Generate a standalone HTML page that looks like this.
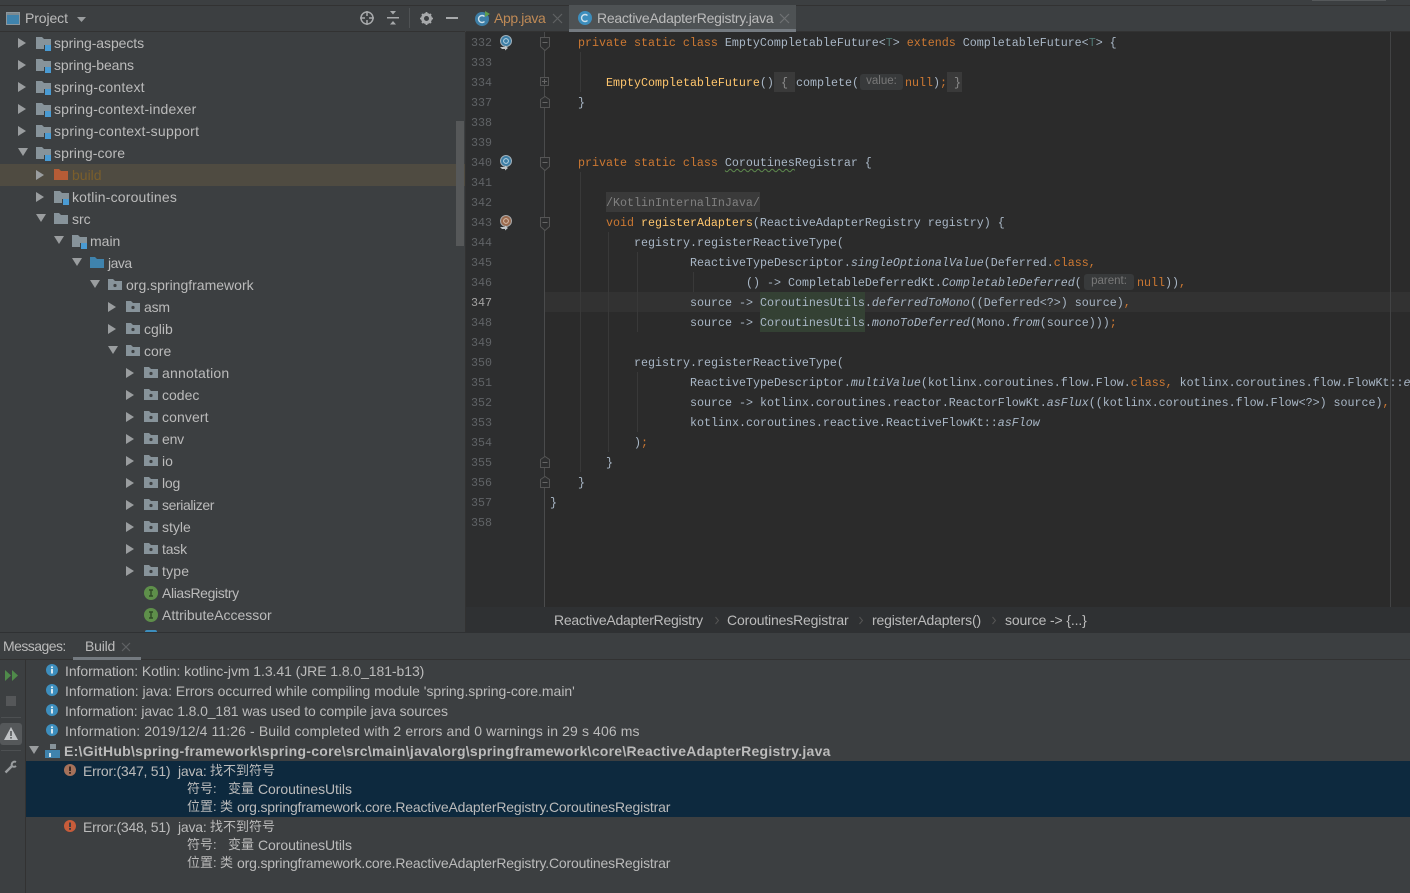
<!DOCTYPE html>
<html><head><meta charset="utf-8"><title>IDE</title>
<style>
html,body{margin:0;padding:0;background:#3c3f41}
#r{position:relative;width:1410px;height:893px;overflow:hidden;background:#3c3f41;font-family:"Liberation Sans","Noto Sans CJK SC",sans-serif;font-size:14px;color:#bbb}
.a{position:absolute}
.t{position:absolute;line-height:20px;white-space:pre}
.z{font-size:13px}
.c{position:absolute;line-height:22px;white-space:pre;font-family:"Liberation Mono",monospace;font-size:11.67px;color:#a9b7c6}
.n{position:absolute;left:466px;width:26px;text-align:right;line-height:22px;font-family:"Liberation Mono",monospace;font-size:11.67px;color:#606366}
.k{color:#cc7832}.m{color:#ffc66d}.i{font-style:italic}
.g{position:absolute;width:1px;background:#393939}
.h{position:absolute;background:#383a3b;border-radius:3px;color:#787878;font-size:11.5px;line-height:15px;text-align:center}
svg{position:absolute;overflow:visible}
</style></head><body><div id="r">
<svg width="0" height="0" style="left:0;top:0">
<defs>
<symbol id="mod" viewBox="0 0 17 16"><path d="M0 0h6l2 2h7v6H8v4H0z" fill="#87939a"/><rect x="9" y="8" width="6" height="6" fill="#4a9bd3"/></symbol>
<symbol id="pkg" viewBox="0 0 14 12"><path d="M0 0h5l2 2h7v9H0z" fill="#87939a"/><circle cx="7" cy="6.5" r="1.6" fill="#3c3f41"/></symbol>
<symbol id="ar" viewBox="0 0 8 10"><path d="M0 0l8 5-8 5z" fill="#9a9d9f"/></symbol>
<symbol id="ad" viewBox="0 0 10 8"><path d="M0 0h10L5 8z" fill="#9a9d9f"/></symbol>
<symbol id="inf" viewBox="0 0 12 12"><circle cx="6" cy="6" r="6" fill="#3d8ebd"/><rect x="5" y="5" width="2" height="4.5" fill="#d8e6ee"/><rect x="5" y="2.4" width="2" height="1.8" fill="#d8e6ee"/></symbol>
<symbol id="fold" viewBox="0 0 10 14"><path d="M.5.5h9v9L5 13.5.5 9.5z" fill="#2d2e2f" stroke="#555"/><path d="M2.5 5.5h5" stroke="#666"/></symbol>
<symbol id="gi" viewBox="0 0 14 16"><circle cx="7" cy="6" r="5.5" fill="#3d7ea6" stroke="#a0b0ba"/><circle cx="7" cy="6" r="2.4" fill="none" stroke="#b8d4e4"/><path d="M1 12h5v-1.500l3 2.500-3 2.500V14H3z" fill="#c0c4c6"/></symbol>
</defs></svg>

<!-- top strip -->
<div class="a" style="left:0;top:0;width:1410px;height:5px;background:#3c3f41;border-bottom:1px solid #323232"></div>
<div class="a" style="left:1312px;top:0;width:74px;height:1px;background:#55585a"></div>

<!-- project header -->
<div class="a" style="left:0;top:31px;width:465px;height:1px;background:#323232"></div>
<svg style="left:6px;top:12px" width="14" height="13"><rect x=".5" y=".5" width="13" height="12" fill="#3f83ad" stroke="#8d979d"/><rect x="1" y="1" width="12" height="2" fill="#7b8990"/></svg>
<div class="t" style="left:25px;top:8px;color:#bbb;letter-spacing:-.1px">Project</div>
<svg style="left:77px;top:17px" width="9" height="5"><path d="M0 0h9L4.500 5z" fill="#9a9d9f"/></svg>
<svg style="left:360px;top:11px" width="14" height="14" fill="none" stroke="#a7a9ab" stroke-width="1.500"><circle cx="7" cy="7" r="6"/><path d="M7 0v5M7 9v5M0 7h5M9 7h5"/></svg>
<svg style="left:387px;top:11px" width="12" height="14" fill="#a7a9ab"><rect y="6" width="12" height="1.500"/><path d="M3 0h6L6 3.500zM3 13.500h6L6 10z"/></svg>
<div class="a" style="left:409px;top:8px;width:1px;height:20px;background:#4f5254"></div>
<svg style="left:420px;top:12px" width="13" height="13"><circle cx="6.500" cy="6.500" r="4" fill="none" stroke="#a7a9ab" stroke-width="3"/><path d="M6.500 0v13M0 6.500h13M2 2l9 9M11 2l-9 9" stroke="#a7a9ab" stroke-width="1.800" stroke-dasharray="2 9 2 0"/></svg>
<div class="a" style="left:446px;top:17px;width:12px;height:2px;background:#a7a9ab"></div>

<!-- tree -->
<div class="a" style="left:0;top:164px;width:465px;height:22px;background:#4f4b41"></div>
<div class="a" style="left:456px;top:121px;width:8px;height:125px;background:#565859"></div>
<div class="a" style="left:465px;top:32px;width:1px;height:600px;background:#323232"></div>

<svg style="left:18px;top:38px" width="8" height="10"><use href="#ar"/></svg><svg style="left:36px;top:37px" width="17" height="16"><use href="#mod"/></svg><div class="t" style="left:54px;top:33px;letter-spacing:-.07px">spring-aspects</div>
<svg style="left:18px;top:60px" width="8" height="10"><use href="#ar"/></svg><svg style="left:36px;top:59px" width="17" height="16"><use href="#mod"/></svg><div class="t" style="left:54px;top:55px;letter-spacing:-.08px">spring-beans</div>
<svg style="left:18px;top:82px" width="8" height="10"><use href="#ar"/></svg><svg style="left:36px;top:81px" width="17" height="16"><use href="#mod"/></svg><div class="t" style="left:54px;top:77px;letter-spacing:.2px">spring-context</div>
<svg style="left:18px;top:104px" width="8" height="10"><use href="#ar"/></svg><svg style="left:36px;top:103px" width="17" height="16"><use href="#mod"/></svg><div class="t" style="left:54px;top:99px;letter-spacing:.18px">spring-context-indexer</div>
<svg style="left:18px;top:126px" width="8" height="10"><use href="#ar"/></svg><svg style="left:36px;top:125px" width="17" height="16"><use href="#mod"/></svg><div class="t" style="left:54px;top:121px;letter-spacing:.27px">spring-context-support</div>
<svg style="left:18px;top:148px" width="10" height="8"><use href="#ad"/></svg><svg style="left:36px;top:147px" width="17" height="16"><use href="#mod"/></svg><div class="t" style="left:54px;top:143px;letter-spacing:.1px">spring-core</div>
<svg style="left:36px;top:170px" width="8" height="10"><use href="#ar"/></svg><svg style="left:54px;top:169px" width="14" height="12"><path d="M0 0h5l2 2h7v9H0z" fill="#b65c36"/></svg><div class="t" style="left:72px;top:165px;color:#7a5e2c">build</div>
<svg style="left:36px;top:192px" width="8" height="10"><use href="#ar"/></svg><svg style="left:54px;top:191px" width="17" height="16"><use href="#mod"/></svg><div class="t" style="left:72px;top:187px;letter-spacing:.18px">kotlin-coroutines</div>
<svg style="left:36px;top:214px" width="10" height="8"><use href="#ad"/></svg><svg style="left:54px;top:213px" width="14" height="12"><path d="M0 0h5l2 2h7v9H0z" fill="#87939a"/></svg><div class="t" style="left:72px;top:209px">src</div>
<svg style="left:54px;top:236px" width="10" height="8"><use href="#ad"/></svg><svg style="left:72px;top:235px" width="17" height="16"><use href="#mod"/></svg><div class="t" style="left:90px;top:231px">main</div>
<svg style="left:72px;top:258px" width="10" height="8"><use href="#ad"/></svg><svg style="left:90px;top:257px" width="14" height="12"><path d="M0 0h5l2 2h7v9H0z" fill="#3f83ad"/></svg><div class="t" style="left:108px;top:253px;letter-spacing:-.5px">java</div>
<svg style="left:90px;top:280px" width="10" height="8"><use href="#ad"/></svg><svg style="left:108px;top:279px" width="14" height="12"><use href="#pkg"/></svg><div class="t" style="left:126px;top:275px">org.springframework</div>
<svg style="left:108px;top:302px" width="8" height="10"><use href="#ar"/></svg><svg style="left:126px;top:301px" width="14" height="12"><use href="#pkg"/></svg><div class="t" style="left:144px;top:297px;letter-spacing:-.2px">asm</div>
<svg style="left:108px;top:324px" width="8" height="10"><use href="#ar"/></svg><svg style="left:126px;top:323px" width="14" height="12"><use href="#pkg"/></svg><div class="t" style="left:144px;top:319px">cglib</div>
<svg style="left:108px;top:346px" width="10" height="8"><use href="#ad"/></svg><svg style="left:126px;top:345px" width="14" height="12"><use href="#pkg"/></svg><div class="t" style="left:144px;top:341px">core</div>
<svg style="left:126px;top:368px" width="8" height="10"><use href="#ar"/></svg><svg style="left:144px;top:367px" width="14" height="12"><use href="#pkg"/></svg><div class="t" style="left:162px;top:363px;letter-spacing:.2px">annotation</div>
<svg style="left:126px;top:390px" width="8" height="10"><use href="#ar"/></svg><svg style="left:144px;top:389px" width="14" height="12"><use href="#pkg"/></svg><div class="t" style="left:162px;top:385px">codec</div>
<svg style="left:126px;top:412px" width="8" height="10"><use href="#ar"/></svg><svg style="left:144px;top:411px" width="14" height="12"><use href="#pkg"/></svg><div class="t" style="left:162px;top:407px;letter-spacing:.1px">convert</div>
<svg style="left:126px;top:434px" width="8" height="10"><use href="#ar"/></svg><svg style="left:144px;top:433px" width="14" height="12"><use href="#pkg"/></svg><div class="t" style="left:162px;top:429px;letter-spacing:-.2px">env</div>
<svg style="left:126px;top:456px" width="8" height="10"><use href="#ar"/></svg><svg style="left:144px;top:455px" width="14" height="12"><use href="#pkg"/></svg><div class="t" style="left:162px;top:451px">io</div>
<svg style="left:126px;top:478px" width="8" height="10"><use href="#ar"/></svg><svg style="left:144px;top:477px" width="14" height="12"><use href="#pkg"/></svg><div class="t" style="left:162px;top:473px;letter-spacing:-.2px">log</div>
<svg style="left:126px;top:500px" width="8" height="10"><use href="#ar"/></svg><svg style="left:144px;top:499px" width="14" height="12"><use href="#pkg"/></svg><div class="t" style="left:162px;top:495px;letter-spacing:-.4px">serializer</div>
<svg style="left:126px;top:522px" width="8" height="10"><use href="#ar"/></svg><svg style="left:144px;top:521px" width="14" height="12"><use href="#pkg"/></svg><div class="t" style="left:162px;top:517px">style</div>
<svg style="left:126px;top:544px" width="8" height="10"><use href="#ar"/></svg><svg style="left:144px;top:543px" width="14" height="12"><use href="#pkg"/></svg><div class="t" style="left:162px;top:539px;letter-spacing:-.2px">task</div>
<svg style="left:126px;top:566px" width="8" height="10"><use href="#ar"/></svg><svg style="left:144px;top:565px" width="14" height="12"><use href="#pkg"/></svg><div class="t" style="left:162px;top:561px;letter-spacing:.2px">type</div>
<svg style="left:144px;top:586px" width="14" height="14"><circle cx="7" cy="7" r="7" fill="#5e8f4a"/><path d="M5 4h4M7 4v6M5 10h4" stroke="#2f4a26" stroke-width="1.400"/></svg><div class="t" style="left:162px;top:583px;letter-spacing:-.38px">AliasRegistry</div>
<svg style="left:144px;top:608px" width="14" height="14"><circle cx="7" cy="7" r="7" fill="#5e8f4a"/><path d="M5 4h4M7 4v6M5 10h4" stroke="#2f4a26" stroke-width="1.400"/></svg><div class="t" style="left:162px;top:605px">AttributeAccessor</div>
<div class="a" style="left:145px;top:630px;width:12px;height:2px;border-radius:6px 6px 0 0;background:#3d8ebd"></div>

<!-- tabs -->
<div class="a" style="left:466px;top:31px;width:944px;height:1px;background:#323232"></div>
<svg style="left:475px;top:11px" width="15" height="15"><circle cx="7" cy="8" r="7" fill="#3d7ea6"/><path d="M9.500 5.500A3.500 3.500 0 1 0 9.500 10.500" fill="none" stroke="#cfe0ea" stroke-width="1.400"/><path d="M10 0l5 3-5 3z" fill="#5f9e4e"/></svg>
<div class="t" style="left:494px;top:8px;color:#bf8a56;letter-spacing:-.38px">App.java</div>
<svg style="left:553px;top:14px" width="9" height="9" stroke="#5f6264" stroke-width="1.200"><path d="M0 0l9 9M9 0L0 9"/></svg>
<div class="a" style="left:569px;top:5px;width:227px;height:24px;background:#4e5254"></div>
<div class="a" style="left:569px;top:29px;width:227px;height:3px;background:#747a80"></div>
<svg style="left:578px;top:11px" width="14" height="14"><circle cx="7" cy="7" r="7" fill="#3d8ebd"/><path d="M9.500 4.500A3.500 3.500 0 1 0 9.500 9.500" fill="none" stroke="#cfe0ea" stroke-width="1.400"/></svg>
<div class="t" style="left:597px;top:8px;color:#bbb;letter-spacing:-.25px">ReactiveAdapterRegistry.java</div>
<svg style="left:780px;top:14px" width="9" height="9" stroke="#6f7274" stroke-width="1.200"><path d="M0 0l9 9M9 0L0 9"/></svg>

<!-- editor -->
<div class="a" style="left:466px;top:32px;width:944px;height:575px;background:#2b2b2b"></div>
<div class="a" style="left:466px;top:32px;width:79px;height:575px;background:#2d2e2f"></div>
<div class="a" style="left:545px;top:292px;width:865px;height:20px;background:#323232"></div>
<div class="a" style="left:760px;top:292px;width:105px;height:40px;background:#344134"></div>
<div class="a" style="left:606px;top:192px;width:154px;height:20px;background:#3a3a3a"></div>
<div class="a" style="left:544px;top:32px;width:1px;height:575px;background:#4a4b4c"></div>
<div class="a" style="left:1390px;top:32px;width:1px;height:575px;background:#424344"></div>

<div class="g" style="left:580px;top:52px;height:40px"></div>
<div class="g" style="left:580px;top:172px;height:300px"></div>
<div class="g" style="left:608px;top:232px;height:220px"></div>
<div class="g" style="left:637px;top:252px;height:80px"></div>
<div class="g" style="left:637px;top:372px;height:60px"></div>
<div class="g" style="left:693px;top:272px;height:20px"></div>

<div class="n" style="top:32px">332</div><div class="n" style="top:52px">333</div><div class="n" style="top:72px">334</div><div class="n" style="top:92px">337</div><div class="n" style="top:112px">338</div><div class="n" style="top:132px">339</div><div class="n" style="top:152px">340</div><div class="n" style="top:172px">341</div><div class="n" style="top:192px">342</div><div class="n" style="top:212px">343</div><div class="n" style="top:232px">344</div><div class="n" style="top:252px">345</div><div class="n" style="top:272px">346</div><div class="n" style="top:292px;color:#a4a3a3">347</div><div class="n" style="top:312px">348</div><div class="n" style="top:332px">349</div><div class="n" style="top:352px">350</div><div class="n" style="top:372px">351</div><div class="n" style="top:392px">352</div><div class="n" style="top:412px">353</div><div class="n" style="top:432px">354</div><div class="n" style="top:452px">355</div><div class="n" style="top:472px">356</div><div class="n" style="top:492px">357</div><div class="n" style="top:512px">358</div>

<svg style="left:499px;top:35px" width="14" height="16"><use href="#gi"/></svg>
<svg style="left:499px;top:155px" width="14" height="16"><use href="#gi"/></svg>
<svg style="left:499px;top:215px" width="14" height="16"><circle cx="7" cy="6" r="5.500" fill="#9a6a4e" stroke="#a8a8a8"/><circle cx="7" cy="6" r="2.400" fill="none" stroke="#d8bca8"/><path d="M1 12h5v-1.500l3 2.500-3 2.500V14H3z" fill="#c0c4c6"/></svg>

<svg style="left:540px;top:37px" width="10" height="14"><use href="#fold"/></svg>
<svg style="left:540px;top:77px" width="10" height="10"><rect x=".5" y=".5" width="8" height="8" fill="#2d2e2f" stroke="#555"/><path d="M2 4.500h5M4.500 2v5" stroke="#666"/></svg>
<svg style="left:540px;top:96px" width="10" height="12"><path d="M.5 11.500v-8L5 .5l4.500 3v8z" fill="#2d2e2f" stroke="#555"/><path d="M2.500 6.500h5" stroke="#666"/></svg>
<svg style="left:540px;top:157px" width="10" height="14"><use href="#fold"/></svg>
<svg style="left:540px;top:217px" width="10" height="14"><use href="#fold"/></svg>
<svg style="left:540px;top:456px" width="10" height="12"><path d="M.5 11.500v-8L5 .5l4.500 3v8z" fill="#2d2e2f" stroke="#555"/><path d="M2.500 6.500h5" stroke="#666"/></svg>
<svg style="left:540px;top:476px" width="10" height="12"><path d="M.5 11.500v-8L5 .5l4.500 3v8z" fill="#2d2e2f" stroke="#555"/><path d="M2.500 6.500h5" stroke="#666"/></svg>

<div class="c" style="left:578px;top:32px"><span class="k">private static class </span>EmptyCompletableFuture&lt;<span style="color:#507874">T</span>&gt; <span class="k">extends </span>CompletableFuture&lt;<span style="color:#507874">T</span>&gt; {</div>
<div class="a" style="left:774px;top:72px;width:21px;height:20px;background:#3a3a3a"></div>
<div class="a" style="left:947px;top:72px;width:15px;height:20px;background:#3a3a3a"></div>
<div class="c" style="left:606px;top:72px"><span class="m">EmptyCompletableFuture</span>()</div>
<div class="c" style="left:781px;top:72px;color:#8c8c8c">{</div>
<div class="c" style="left:796px;top:72px">complete(</div>
<div class="h" style="left:860px;top:74px;width:43px;height:16px">value:</div>
<div class="c" style="left:905px;top:72px"><span class="k">null</span>)<span class="k">;</span></div>
<div class="c" style="left:954px;top:72px;color:#8c8c8c">}</div>
<div class="c" style="left:578px;top:92px">}</div>
<div class="c" style="left:578px;top:152px"><span class="k">private static class </span><span style="text-decoration:underline wavy #5e8a4e;text-decoration-thickness:1px;text-underline-offset:2px">Coroutines</span>Registrar {</div>
<div class="c" style="left:606px;top:192px;color:#808080">/KotlinInternalInJava/</div>
<div class="c" style="left:606px;top:212px"><span class="k">void </span><span class="m">registerAdapters</span>(ReactiveAdapterRegistry registry) {</div>
<div class="c" style="left:634px;top:232px">registry.registerReactiveType(</div>
<div class="c" style="left:690px;top:252px">ReactiveTypeDescriptor.<span class="i">singleOptionalValue</span>(Deferred.<span class="k">class,</span></div>
<div class="c" style="left:746px;top:272px">() -&gt; CompletableDeferredKt.<span class="i">CompletableDeferred</span>(</div>
<div class="h" style="left:1084px;top:274px;width:50px;height:16px">parent:</div>
<div class="c" style="left:1137px;top:272px"><span class="k">null</span>))<span class="k">,</span></div>
<div class="c" style="left:690px;top:292px">source -&gt; CoroutinesUtils.<span class="i">deferredToMono</span>((Deferred&lt;?&gt;) source)<span class="k">,</span></div>
<div class="c" style="left:690px;top:312px">source -&gt; CoroutinesUtils.<span class="i">monoToDeferred</span>(Mono.<span class="i">from</span>(source)))<span class="k">;</span></div>
<div class="c" style="left:634px;top:352px">registry.registerReactiveType(</div>
<div class="c" style="left:690px;top:372px">ReactiveTypeDescriptor.<span class="i">multiValue</span>(kotlinx.coroutines.flow.Flow.<span class="k">class,</span> kotlinx.coroutines.flow.FlowKt::<span class="i">emptyFlow</span></div>
<div class="c" style="left:690px;top:392px">source -&gt; kotlinx.coroutines.reactor.ReactorFlowKt.<span class="i">asFlux</span>((kotlinx.coroutines.flow.Flow&lt;?&gt;) source)<span class="k">,</span></div>
<div class="c" style="left:690px;top:412px">kotlinx.coroutines.reactive.ReactiveFlowKt::<span class="i">asFlow</span></div>
<div class="c" style="left:634px;top:432px">)<span class="k">;</span></div>
<div class="c" style="left:606px;top:452px">}</div>
<div class="c" style="left:578px;top:472px">}</div>
<div class="c" style="left:550px;top:492px">}</div>

<!-- breadcrumb -->
<div class="a" style="left:466px;top:607px;width:944px;height:25px;background:#2f3133"></div>
<div class="t" style="left:554px;top:610px;letter-spacing:-.26px">ReactiveAdapterRegistry</div>
<div class="t" style="left:727px;top:610px;letter-spacing:-.16px">CoroutinesRegistrar</div>
<div class="t" style="left:872px;top:610px;letter-spacing:-.17px">registerAdapters()</div>
<div class="t" style="left:1005px;top:610px;letter-spacing:-.13px">source -&gt; {...}</div>
<svg style="left:715px;top:617px" width="4" height="7" fill="none" stroke="#555"><path d="M.5 0l3 3.500-3 3.500"/></svg>
<svg style="left:859px;top:617px" width="4" height="7" fill="none" stroke="#555"><path d="M.5 0l3 3.500-3 3.500"/></svg>
<svg style="left:992px;top:617px" width="4" height="7" fill="none" stroke="#555"><path d="M.5 0l3 3.500-3 3.500"/></svg>

<!-- messages -->
<div class="a" style="left:0;top:632px;width:1410px;height:1px;background:#2f3133"></div>
<div class="a" style="left:0;top:659px;width:1410px;height:1px;background:#323232"></div>
<div class="t" style="left:3px;top:636px;letter-spacing:-.55px">Messages:</div>
<div class="t" style="left:85px;top:636px;letter-spacing:-.2px">Build</div>
<svg style="left:122px;top:643px" width="8" height="8" stroke="#5f6264" stroke-width="1.200"><path d="M0 0l8 8M8 0L0 8"/></svg>
<div class="a" style="left:73px;top:657px;width:68px;height:3px;background:#747a80"></div>

<div class="a" style="left:25px;top:660px;width:1px;height:233px;background:#323232"></div>
<svg style="left:5px;top:670px" width="14" height="11" fill="#4f8a4a"><path d="M0 0l6 5.500L0 11zM7 0l6 5.500L7 11z"/></svg>
<div class="a" style="left:6px;top:696px;width:10px;height:10px;background:#555759"></div>
<div class="a" style="left:1px;top:717px;width:20px;height:1px;background:#4d5052"></div>
<div class="a" style="left:0;top:723px;width:22px;height:22px;border-radius:3px;background:#55585a"></div>
<svg style="left:4px;top:727px" width="14" height="13"><path d="M7 0l7 13H0z" fill="#c0c3c5"/><rect x="6.200" y="4" width="1.600" height="5" fill="#55585a"/><rect x="6.200" y="10" width="1.600" height="1.600" fill="#55585a"/></svg>
<div class="a" style="left:1px;top:750px;width:20px;height:1px;background:#4d5052"></div>
<svg style="left:4px;top:760px" width="14" height="14" fill="none" stroke="#9a9d9f" stroke-width="2.400"><path d="M1.500 12.500L8 6"/><path d="M8 6a3 3 0 0 1 4-4M8 6a3 3 0 0 0 4-0" stroke-width="2"/></svg>

<svg style="left:46px;top:664px" width="12" height="12"><use href="#inf"/></svg><div class="t" style="left:65px;top:661px;letter-spacing:-.07px">Information: Kotlin: kotlinc-jvm 1.3.41 (JRE 1.8.0_181-b13)</div>
<svg style="left:46px;top:684px" width="12" height="12"><use href="#inf"/></svg><div class="t" style="left:65px;top:681px;letter-spacing:-.025px">Information: java: Errors occurred while compiling module 'spring.spring-core.main'</div>
<svg style="left:46px;top:704px" width="12" height="12"><use href="#inf"/></svg><div class="t" style="left:65px;top:701px;letter-spacing:-.115px">Information: javac 1.8.0_181 was used to compile java sources</div>
<svg style="left:46px;top:724px" width="12" height="12"><use href="#inf"/></svg><div class="t" style="left:65px;top:721px;letter-spacing:.11px">Information: 2019/12/4 11:26 - Build completed with 2 errors and 0 warnings in 29 s 406 ms</div>
<svg style="left:29px;top:746px" width="10" height="8"><use href="#ad"/></svg>
<svg style="left:45px;top:743px" width="15" height="15"><rect x="0" y="7" width="15" height="8" fill="#3f83ad"/><rect x="4" y="10" width="2" height="4" fill="#d8e6ee"/><rect x="5" y="1" width="6" height="5" fill="#87939a"/></svg>
<div class="t" style="left:64px;top:741px;font-weight:bold;color:#bbb;letter-spacing:.27px">E:\GitHub\spring-framework\spring-core\src\main\java\org\springframework\core\ReactiveAdapterRegistry.java</div>

<div class="a" style="left:26px;top:761px;width:1384px;height:56px;background:#0d293e"></div>
<svg style="left:64px;top:764px" width="12" height="12"><circle cx="6" cy="6" r="6" fill="#a5715a"/><rect x="5" y="2.500" width="2" height="4.500" fill="#3a2a25"/><rect x="5" y="8" width="2" height="1.800" fill="#3a2a25"/></svg>
<div class="t" style="left:83px;top:761px;letter-spacing:-.25px">Error:(347, 51)</div><div class="t" style="left:178px;top:761px;letter-spacing:-.2px">java:</div><div class="t z" style="left:210px;top:761px">找不到符号</div>
<div class="t z" style="left:187px;top:779px">符号:</div><div class="t z" style="left:228px;top:779px">变量</div><div class="t" style="left:258px;top:779px;letter-spacing:-.07px">CoroutinesUtils</div>
<div class="t z" style="left:187px;top:797px">位置:</div><div class="t z" style="left:220px;top:797px">类</div><div class="t" style="left:237px;top:797px;letter-spacing:-.17px">org.springframework.core.ReactiveAdapterRegistry.CoroutinesRegistrar</div>
<svg style="left:64px;top:820px" width="12" height="12"><circle cx="6" cy="6" r="6" fill="#c75c3a"/><rect x="5" y="2.500" width="2" height="4.500" fill="#3c3f41"/><rect x="5" y="8" width="2" height="1.800" fill="#3c3f41"/></svg>
<div class="t" style="left:83px;top:817px;letter-spacing:-.25px">Error:(348, 51)</div><div class="t" style="left:178px;top:817px;letter-spacing:-.2px">java:</div><div class="t z" style="left:210px;top:817px">找不到符号</div>
<div class="t z" style="left:187px;top:835px">符号:</div><div class="t z" style="left:228px;top:835px">变量</div><div class="t" style="left:258px;top:835px;letter-spacing:-.07px">CoroutinesUtils</div>
<div class="t z" style="left:187px;top:853px">位置:</div><div class="t z" style="left:220px;top:853px">类</div><div class="t" style="left:237px;top:853px;letter-spacing:-.17px">org.springframework.core.ReactiveAdapterRegistry.CoroutinesRegistrar</div>
</div></body></html>
